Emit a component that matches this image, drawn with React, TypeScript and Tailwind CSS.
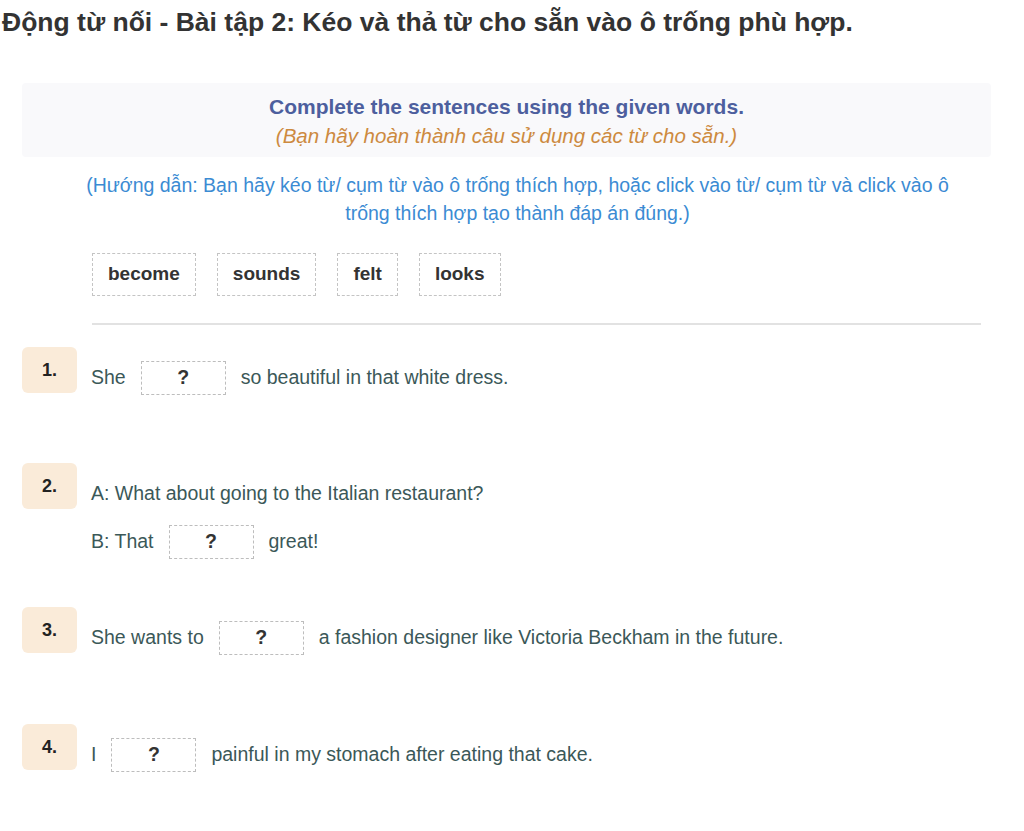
const words = ['become', 'sounds', 'felt', 'looks']

function Blank() {
  return (
    <span className="mx-[15px] inline-flex h-[34px] w-[85px] items-center justify-center border border-dashed border-[#bdbdbd] bg-white font-bold text-[#333]">
      ?
    </span>
  )
}

function Line({ children }: { children: React.ReactNode }) {
  return <div className="flex h-[34px] items-center whitespace-nowrap">{children}</div>
}

function Item({ n, h, children }: { n: number; h: string; children: React.ReactNode }) {
  return (
    <div className={`flex gap-[14px] ${h}`}>
      <div className="flex h-[46px] w-[55px] shrink-0 items-center justify-center rounded-md bg-[#faebd9] text-[18px] font-bold text-[#222]">
        {n}.
      </div>
      <div className="flex flex-col pt-[14px] text-[19.5px] text-[#3b5858]">{children}</div>
    </div>
  )
}

export default function App() {
  return (
    <div className="min-h-[831px] bg-white font-['Liberation_Sans',Arial,sans-serif]">
      <h1 className="pl-[2px] pt-[6px] text-[26.5px] font-bold leading-[32px] text-[#333]">
        Động từ nối - Bài tập 2: Kéo và thả từ cho sẵn vào ô trống phù hợp.
      </h1>

      <div className="ml-[22px] mr-[33px] mt-[45px]">
        {/* Header box */}
        <div className="flex h-[74px] flex-col items-center justify-center rounded bg-[#f9f9fb] pt-[2px]">
          <div className="text-[21px] font-bold leading-[29px] text-[#4d5f9e]">
            Complete the sentences using the given words.
          </div>
          <div className="text-[20.5px] italic leading-[29px] text-[#cd8a3f]">
            (Bạn hãy hoàn thành câu sử dụng các từ cho sẵn.)
          </div>
        </div>

        {/* Instructions */}
        <div className="mt-[14px] pl-[32px] pr-[10px] text-center text-[19.5px] leading-[28px] text-[#3b8bd3]">
          (Hướng dẫn: Bạn hãy kéo từ/ cụm từ vào ô trống thích hợp, hoặc click vào từ/ cụm từ và click vào ô
          <br />
          trống thích hợp tạo thành đáp án đúng.)
        </div>

        {/* Word bank */}
        <div className="ml-[70px] mr-[10px] mt-[26px]">
          <div className="flex gap-[21px]">
            {words.map((w) => (
              <div
                key={w}
                className="flex h-[43px] items-center border border-dashed border-[#c4c4c4] bg-white px-[15px] text-[19px] font-bold text-[#333]"
              >
                {w}
              </div>
            ))}
          </div>
          <div className="mt-[27px] h-[2px] bg-[#e2e2e2]" />
        </div>

        {/* Questions */}
        <div className="mt-[22px]">
          <Item n={1} h="h-[116px]">
            <Line>
              She
              <Blank />
              so beautiful in that white dress.
            </Line>
          </Item>
          <Item n={2} h="h-[144px]">
            <Line>A: What about going to the Italian restaurant?</Line>
            <div className="mt-[14px]">
              <Line>
                B: That
                <Blank />
                great!
              </Line>
            </div>
          </Item>
          <Item n={3} h="h-[117px]">
            <Line>
              She wants to
              <Blank />
              a fashion designer like Victoria Beckham in the future.
            </Line>
          </Item>
          <Item n={4} h="h-[60px]">
            <Line>
              I
              <Blank />
              painful in my stomach after eating that cake.
            </Line>
          </Item>
        </div>
      </div>
    </div>
  )
}
